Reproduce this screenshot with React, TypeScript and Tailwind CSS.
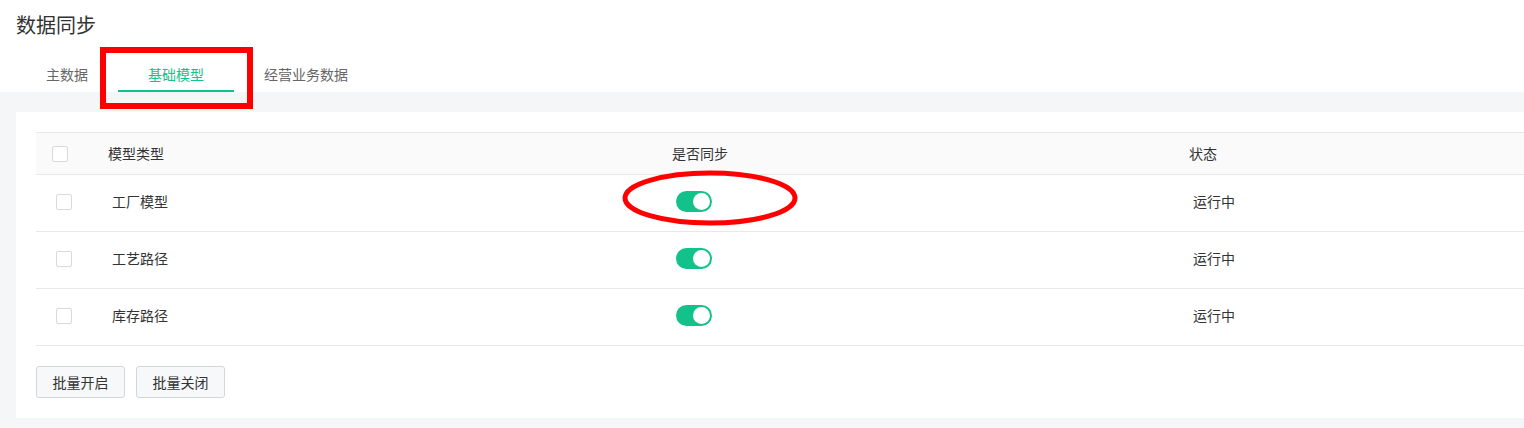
import { useState } from "react"

type Row = { id: number; name: string; sync: boolean; status: string }

const initialRows: Row[] = [
   { id: 1, name: "工厂模型", sync: true, status: "运行中" },
   { id: 2, name: "工艺路径", sync: true, status: "运行中" },
   { id: 3, name: "库存路径", sync: true, status: "运行中" },
]

const tabs = ["主数据", "基础模型", "经营业务数据"]

function Checkbox() {
   return <span className="block h-4 w-4 rounded-[2px] border border-[#d9d9d9] bg-white" />
}

function Toggle({ on, onClick }: { on: boolean; onClick: () => void }) {
   return (
      <button
         onClick={onClick}
         className={`flex h-[21px] w-9 items-center rounded-full px-[2px] ${on ? "justify-end bg-[#13c28b]" : "justify-start bg-[#c0c4cc]"}`}
      >
         <span className="block h-[17px] w-[17px] rounded-full bg-white" />
      </button>
   )
}

function App() {
   const [rows, setRows] = useState(initialRows)
   const [active, setActive] = useState(1)

   return (
      <div className="relative min-h-[428px] w-full overflow-hidden bg-[#f5f6f8] font-['Noto_Sans_CJK_SC','Noto_Sans',sans-serif] text-[#333]">
         <header className="bg-white">
            <h1 className="h-[50px] pl-4 pt-[11px] text-[20px] leading-[28px] text-[#333]">数据同步</h1>
            <nav className="flex h-[42px] pl-4">
               {tabs.map((tab, i) => (
                  <button
                     key={tab}
                     onClick={() => setActive(i)}
                     className={`relative flex items-start px-[30px] pt-[14px] text-[14px] leading-[20px] ${i === active ? "text-[#13c28b]" : "text-[#666]"}`}
                  >
                     {tab}
                     {i === active && <span className="absolute bottom-0 left-0 right-0 h-[2px] bg-[#13c28b]" />}
                  </button>
               ))}
            </nav>
         </header>

         <section className="ml-4 mt-5 bg-white pb-5 pl-5 pt-5">
            <div className="text-[14px]">
               <div className="grid h-[43px] grid-cols-[56px_564px_517px_1fr] items-center border-y border-[#e8e8e8] bg-[#fafafa]">
                  <div className="pl-4">
                     <Checkbox />
                  </div>
                  <div className="pl-4">模型类型</div>
                  <div className="pl-4">是否同步</div>
                  <div className="pl-4">状态</div>
               </div>
               {rows.map((row) => (
                  <div
                     key={row.id}
                     className="grid h-[57px] grid-cols-[56px_564px_517px_1fr] items-center border-b border-[#e8e8e8] pb-[3px]"
                  >
                     <div className="pl-5">
                        <Checkbox />
                     </div>
                     <div className="pl-5">{row.name}</div>
                     <div className="pl-5">
                        <Toggle
                           on={row.sync}
                           onClick={() =>
                              setRows(rows.map((r) => (r.id === row.id ? { ...r, sync: !r.sync } : r)))
                           }
                        />
                     </div>
                     <div className="pl-5">{row.status}</div>
                  </div>
               ))}
            </div>
            <div className="mt-5 flex gap-[11px]">
               <button className="h-[32px] w-[89px] rounded-[3px] border border-[#d3d6db] bg-[#f7f8fa] text-[14px] text-[#333]">
                  批量开启
               </button>
               <button className="h-[32px] w-[89px] rounded-[3px] border border-[#d3d6db] bg-[#f7f8fa] text-[14px] text-[#333]">
                  批量关闭
               </button>
            </div>
         </section>

         {/* annotations */}
         <div className="pointer-events-none absolute left-[100px] top-[47px] h-[62px] w-[153px] border-[6px] border-[#ff0000]" />
         <svg className="pointer-events-none absolute left-[620px] top-[164px]" width="180" height="64" viewBox="0 0 180 64">
            <ellipse cx="90" cy="34" rx="85" ry="25" fill="none" stroke="#ff0000" strokeWidth="5" />
         </svg>
      </div>
   )
}

export default App
